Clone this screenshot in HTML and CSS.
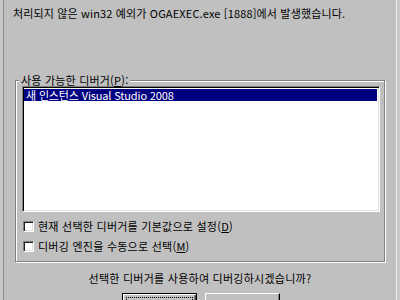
FILE: index.html
```html
<!DOCTYPE html>
<html lang="ko">
<head>
<meta charset="utf-8">
<link rel="stylesheet" href="styles.css">
</head>
<body>
<div class="frame">
  <p class="msg">처리되지 않은 win32 예외가 OGAEXEC.exe [1888]에서 발생했습니다.</p>
  <div class="group">
    <div class="legend">사용 가능한 디버거(<u>P</u>):</div>
    <div class="listbox">
      <div class="item sel">새 인스턴스 Visual Studio 2008</div>
    </div>
    <div class="opts">
      <div class="opt"><span class="box"></span><span>현재 선택한 디버거를 기본값으로 설정(<u>D</u>)</span></div>
      <div class="opt"><span class="box"></span><span>디버깅 엔진을 수동으로 선택(<u>M</u>)</span></div>
    </div>
  </div>
  <p class="question">선택한 디버거를 사용하여 디버깅하시겠습니까?</p>
  <div class="buttons">
    <div class="btn default"><span class="focus">예(<u>Y</u>)</span></div>
    <div class="btn"><span class="label">아니오(<u>N</u>)</span></div>
  </div>
</div>
</body>
</html>
```

FILE: styles.css
```css
html, body {
  margin: 0;
  padding: 0;
}
body {
  width: 400px;
  height: 300px;
  overflow: hidden;
  background: #c8c8c8;
  font-family: "Noto Sans CJK KR", "Noto Sans", sans-serif;
  font-size: 11px;
  color: #000;
}
.frame {
  box-sizing: border-box;
  margin-left: 3px;
  width: 394px;
  height: 300px;
  overflow: hidden;
  background: #c0c0c0;
  border-left: 1px solid #8e8e8e;
  border-right: 1px solid #ececec;
}
.msg {
  margin: 0;
  padding: 7px 0 0 9px;
  line-height: 12px;
  height: 12px;
  white-space: nowrap;
  letter-spacing: 0.15px;
}
.group {
  box-sizing: border-box;
  margin: 61px 0 0 11px;
  width: 370px;
  height: 182px;
  border: 1px solid #808080;
  box-shadow: inset 1px 1px 0 #fff, 1px 1px 0 #fff;
}
.legend {
  width: fit-content;
  margin: -7px 0 0 3px;
  padding: 0 2px;
  background: #c0c0c0;
  line-height: 12px;
  height: 12px;
  white-space: nowrap;
  letter-spacing: 0.2px;
}
.listbox {
  box-sizing: border-box;
  margin: 0 0 0 6px;
  width: 358px;
  height: 126px;
  background: #fff;
  border: 1px solid;
  border-color: #808080 #fff #fff #808080;
  box-shadow: inset 1px 1px 0 #000, inset -1px -1px 0 #dfdfdf;
  padding: 2px 2px 0 1px;
}
.item {
  height: 12px;
  line-height: 12px;
  padding-left: 2px;
  white-space: nowrap;
  letter-spacing: -0.15px;
}
.item.sel {
  background: #000080;
  color: #fff;
}
.opts {
  padding: 9px 0 0 7px;
  display: flex;
  flex-direction: column;
  gap: 9px;
}
.opt {
  display: flex;
  align-items: center;
  gap: 4px;
  height: 11px;
  line-height: 11px;
  white-space: nowrap;
  letter-spacing: 0.25px;
}
.box {
  box-sizing: border-box;
  width: 11px;
  height: 11px;
  background: #fff;
  border: 1px solid;
  border-color: #808080 #fff #fff #808080;
  box-shadow: inset 1px 1px 0 #202020, inset -1px -1px 0 #dfdfdf;
}
.question {
  margin: 10px 0 0 0;
  text-align: center;
  line-height: 12px;
  height: 12px;
  white-space: nowrap;
  letter-spacing: 0.25px;
}
.buttons {
  margin-top: 9px;
  padding-left: 118px;
  display: flex;
  gap: 8px;
}
.btn {
  box-sizing: border-box;
  width: 75px;
  height: 23px;
  background: #c0c0c0;
  display: flex;
  border: 1px solid;
  border-color: #fff #000 #000 #fff;
  box-shadow: inset -1px -1px 0 #808080;
}
.btn.default {
  border-color: #000;
  box-shadow: inset 1px 1px 0 #fff, inset -1px -1px 0 #404040, inset -2px -2px 0 #808080;
}
.focus, .label {
  flex: 1;
  display: flex;
  align-items: center;
  justify-content: center;
  line-height: 12px;
}
.focus {
  margin: 3px;
  border: 1px dotted #000;
}
```
